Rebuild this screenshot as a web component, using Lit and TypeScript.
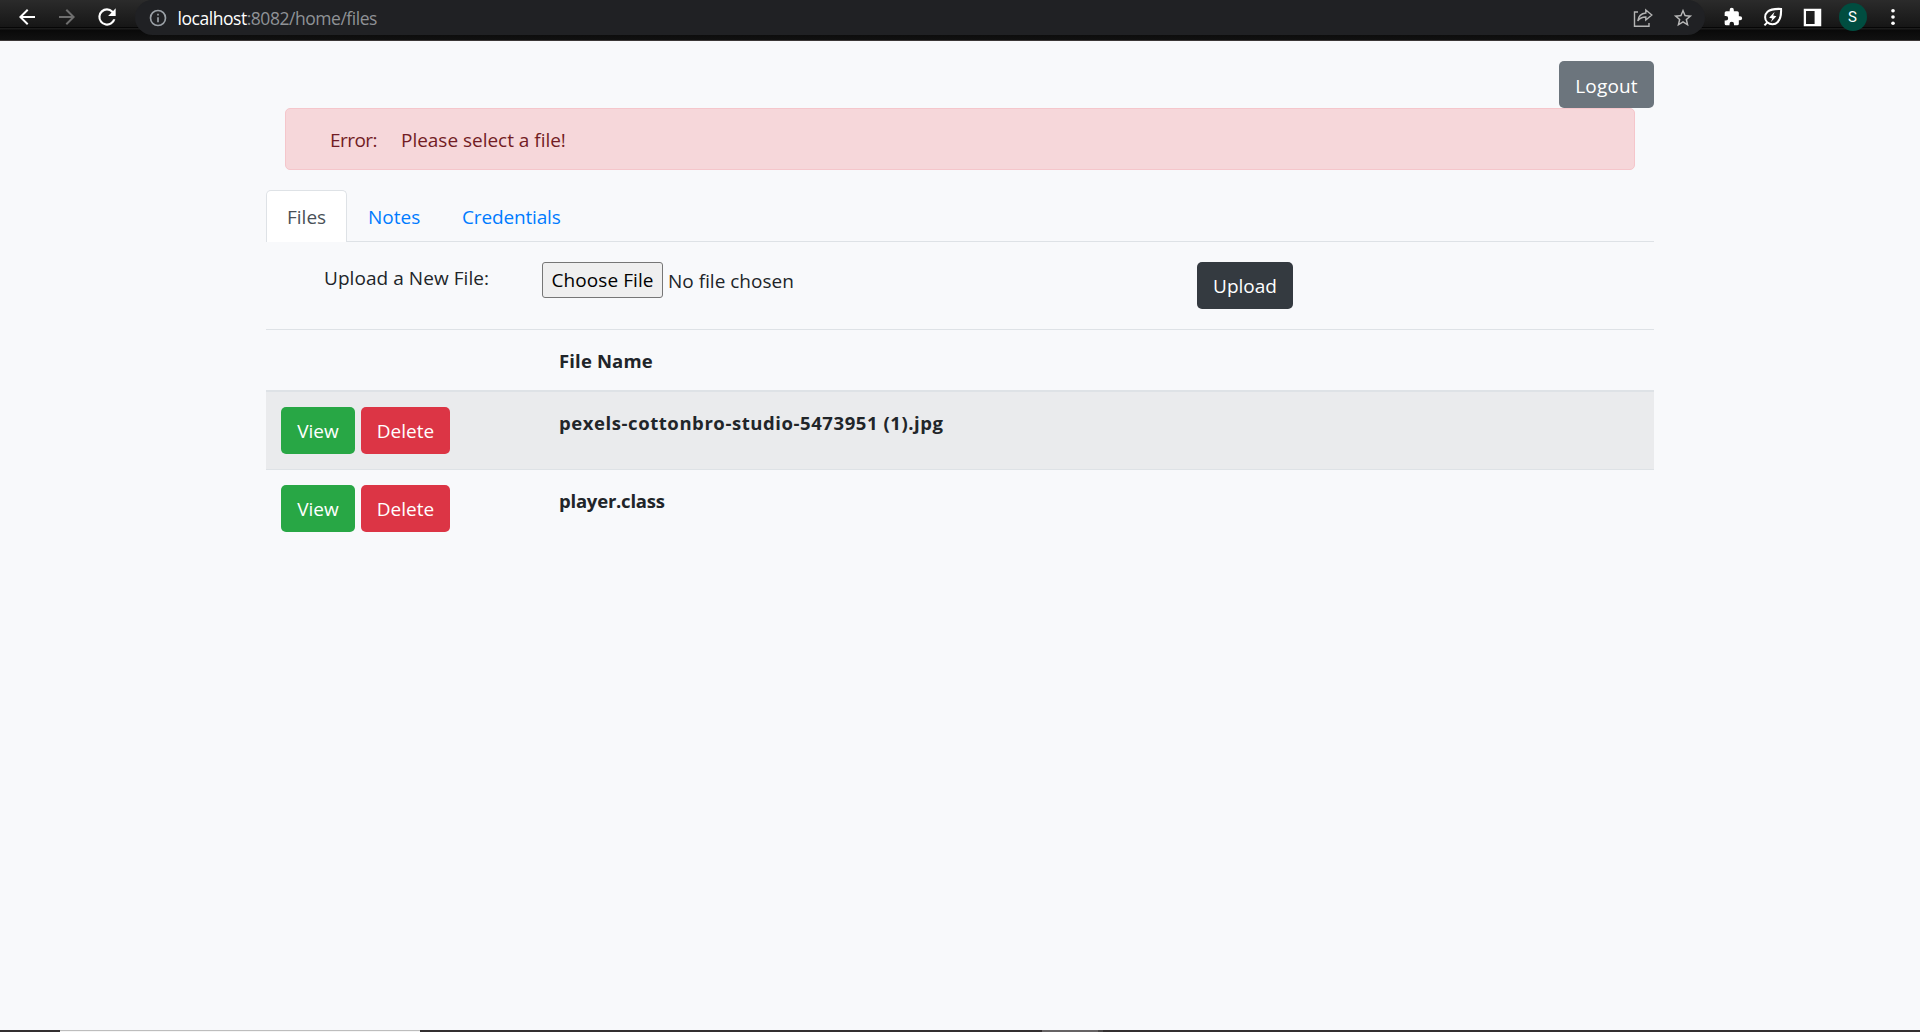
import { LitElement, html, css, svg } from "lit";
import { customElement, property } from "lit/decorators.js";

const icons: Record<string, unknown> = {
  back: svg`<path fill="#fff" d="M20 11H7.83l5.59-5.59L12 4l-8 8 8 8 1.41-1.41L7.83 13H20z"/>`,
  forward: svg`<path fill="#6f6f6f" d="M4 11h12.17l-5.59-5.59L12 4l8 8-8 8-1.41-1.41L16.17 13H4z"/>`,
  reload: svg`<path fill="#fff" d="M17.65 6.35A7.96 7.96 0 0 0 12 4a8 8 0 1 0 7.73 10h-2.08A6 6 0 1 1 12 6c1.66 0 3.14.69 4.22 1.78L13 11h7V4z"/>`,
  info: svg`<path fill="#9aa0a6" d="M11 7h2v2h-2zm0 4h2v6h-2zm1-9a10 10 0 1 0 0 20 10 10 0 0 0 0-20zm0 18a8 8 0 1 1 0-16 8 8 0 0 1 0 16z"/>`,
  share: svg`<g fill="none" stroke="#b4b4b4" stroke-width="1.4"><path d="M7 6H3.500v14.200h14.500V17"/><path d="M14.800 4l6 5-6 5v-3c-4 0-6.300 1.300-8 4 .5-4.500 3-7.500 8-8z"/></g>`,
  star: svg`<path fill="#b9b9b9" d="M22 9.240l-7.190-.62L12 2 9.190 8.630 2 9.240l5.460 4.730L5.820 21 12 17.270 18.180 21l-1.630-7.030zM12 15.400l-3.760 2.270 1-4.280-3.320-2.880 4.380-.38L12 6.100l1.710 4.040 4.380.38-3.320 2.880 1 4.280z"/>`,
  puzzle: svg`<path fill="#fff" d="M20.500 11H19V7a2 2 0 0 0-2-2h-4V3.500a2.500 2.500 0 0 0-5 0V5H4a2 2 0 0 0-2 2v3.800h1.500a2.700 2.700 0 0 1 0 5.400H2V20a2 2 0 0 0 2 2h3.800v-1.500a2.700 2.700 0 0 1 5.400 0V22H17a2 2 0 0 0 2-2v-4h1.500a2.500 2.500 0 0 0 0-5z"/>`,
  leaf: svg`<g fill="none" stroke="#fff" stroke-width="2.200"><path d="M20.800 3.200c-6-.3-11.500.2-14.800 3.100-3.500 3.200-3.300 8.600-.3 11.500 3.300 3 8.500 3 11.500-.3 3-3.200 3.900-8.300 3.600-14.300z"/><path d="M6 17.600l-3.300 3.600"/></g><path fill="#fff" d="M13.800 6.200l-6 6.500 3.500.8-1.800 4.200 6.200-6.500-3.500-.8z"/>`,
  panel: svg`<path fill="#fff" d="M2 2h20v20H2zM4.600 4.600v14.800h9.800V4.600z" fill-rule="evenodd"/>`,
  more: svg`<g fill="#fff"><circle cx="12" cy="4.500" r="2.200"/><circle cx="12" cy="12" r="2.200"/><circle cx="12" cy="19.500" r="2.200"/></g>`,
};

const icon = (name: string, size: number) =>
  html`<svg width=${size} height=${size} viewBox="0 0 24 24">${icons[name]}</svg>`;

@customElement("browser-bar")
export class BrowserBar extends LitElement {
  static styles = css`
    :host { display: block; }
    .bar {
      height: 41px; box-sizing: border-box; display: flex; align-items: flex-start;
      border-bottom: 1px solid #3b3737;
      background: linear-gradient(#2b2b2b 0, #161616 27px, #060606 27px, #060606 28px, #1c1c1c 28px, #1c1c1c 29px, #090909 30px, #111 40px);
    }
    .nav { display: flex; flex: none; padding-left: 7px; width: 135px; box-sizing: border-box; }
    .cell { flex: none; width: 40px; height: 34px; display: flex; align-items: center; justify-content: center; }
    .omni {
      flex: none; width: 1570px; height: 35px; box-sizing: border-box;
      border-radius: 17.5px; background: #202124; display: flex; align-items: center; padding: 0 2px 0 12.5px;
    }
    .url { font: 17.5px/34px "Open Sans", sans-serif; color: #8f9296; margin-left: 10px; flex: 1; letter-spacing: -0.46px; white-space: nowrap; }
    .host { color: #fff; }
    .tools { display: flex; padding-left: 7.500px; }
    .avatar { width: 28px; height: 28px; border-radius: 50%; background: #004d40; color: #fff; font: 15px/28px Roboto, sans-serif; text-align: center; }
    svg { display: block; }
  `;
  render() {
    return html`<div class="bar">
      <div class="nav">
        <div class="cell">${icon("back", 24)}</div>
        <div class="cell">${icon("forward", 24)}</div>
        <div class="cell">${icon("reload", 26)}</div>
      </div>
      <div class="omni">
        ${icon("info", 20)}
        <div class="url"><span class="host">localhost</span>:8082/home/files</div>
        <div class="cell">${icon("share", 24)}</div>
        <div class="cell">${icon("star", 22)}</div>
      </div>
      <div class="tools">
        <div class="cell">${icon("puzzle", 20)}</div>
        <div class="cell">${icon("leaf", 22)}</div>
        <div class="cell">${icon("panel", 21)}</div>
        <div class="cell"><div class="avatar">S</div></div>
        <div class="cell">${icon("more", 20)}</div>
      </div>
    </div>`;
  }
}

@customElement("action-button")
export class ActionButton extends LitElement {
  @property() label = "";
  @property() kind = "secondary";
  static styles = css`
    :host { display: block; }
    .btn {
      width: 100%; height: 47px; border: 0; border-radius: 5px; color: #fff; padding: 1px 0 0;
      font: 19px/44px "Open Sans", sans-serif; text-align: center; display: block;
    }
    .secondary { background: #6c757d; padding-top: 2px; letter-spacing: 0.15px; }
    .dark { background: #343a40; }
    .success { background: #28a745; }
    .danger { background: #dc3545; }
  `;
  render() {
    return html`<button class="btn ${this.kind}">${this.label}</button>`;
  }
}

@customElement("app-root")
export class AppRoot extends LitElement {
  files = [
    { name: "pexels-cottonbro-studio-5473951 (1).jpg", track: "wide" },
    { name: "player.class", track: "tight" },
  ];
  static styles = css`
    :host { display: flex; flex-direction: column; height: 1032px; background: #f8f9fb; color: #212529; font: 19px/30px "Open Sans", sans-serif; white-space: nowrap; }
    .page { flex: 1; width: 1388px; margin-left: 266px; padding-top: 20px; }
    .top { display: flex; justify-content: flex-end; }
    .logout { width: 95px; }
    .alert { margin: 0 19px; height: 62px; box-sizing: border-box; border: 1px solid #f5c6cb; border-radius: 5px; background: #f6d7da; color: #721c24; display: flex; padding: 16px 0 0 44px; }
    .err { width: 71px; letter-spacing: -0.55px; }
    .msg { letter-spacing: -0.02px; }
    .tabs { margin-top: 20px; height: 52px; box-sizing: border-box; border-bottom: 1px solid #dee2e6; display: flex; color: #007bff; }
    .tab { height: 52px; box-sizing: border-box; padding: 12px 0 0 21px; }
    .active { width: 81px; color: #495057; background: #fff; border: 1px solid #dee2e6; border-bottom: 0; border-radius: 5px 5px 0 0; padding: 11px 0 0 20px; }
    .notes { width: 94px; }
    .creds { letter-spacing: -0.15px; }
    .form { height: 87px; display: flex; padding-top: 20px; box-sizing: border-box; align-items: flex-start; }
    .label { width: 218px; padding-left: 58px; line-height: 33px; letter-spacing: 0.06px; }
    .choose { width: 121px; height: 36px; box-sizing: border-box; border: 1px solid #767676; border-radius: 3px; background: #efefef; color: #000; font: 19px/33px "Open Sans", sans-serif; padding: 1px 0 0; text-align: center; letter-spacing: 0.08px; }
    .none { padding: 4px 0 0 5px; width: 529px; box-sizing: content-box; }
    .upload { width: 96px; }
    .head { border-top: 1px solid #dee2e6; border-bottom: 2px solid #dee2e6; height: 63px; box-sizing: border-box; display: flex; align-items: flex-start; }
    .row { height: 78px; box-sizing: border-box; display: flex; padding-top: 15px; }
    .row.odd { background: #eaebed; border-bottom: 1px solid #dee2e6; }
    .ops { display: flex; gap: 6px; width: 293px; padding-left: 15px; box-sizing: border-box; }
    .view { width: 74px; }
    .del { width: 89px; }
    .name { font-weight: 700; padding-top: 1px; font-size: 18.5px; }
    .wide { letter-spacing: 0.57px; }
    .tight { letter-spacing: -0.22px; }
    .head .name { padding-top: 16px; letter-spacing: 0.15px; }
    .strip { height: 2px; display: flex; background: #332f30; }
    .seg1 { margin-left: 60px; width: 360px; background: linear-gradient(#bdbdbd 50%, #f5f5f5 50%); }
    .seg2 { margin-left: 622px; width: 56px; background: #666364; }
    .seg3 { width: 5px; background: #4a4748; }
  `;
  render() {
    return html`
      <browser-bar></browser-bar>
      <div class="page">
        <div class="top"><action-button class="logout" label="Logout"></action-button></div>
        <div class="alert"><span class="err">Error:</span><span class="msg">Please select a file!</span></div>
        <div class="tabs">
          <div class="tab active">Files</div>
          <div class="tab notes">Notes</div>
          <div class="tab creds">Credentials</div>
        </div>
        <div class="form">
          <div class="label">Upload a New File:</div>
          <button class="choose">Choose File</button>
          <div class="none">No file chosen</div>
          <action-button class="upload" kind="dark" label="Upload"></action-button>
        </div>
        <div class="head"><div class="ops"></div><div class="name">File Name</div></div>
        ${this.files.map((f, i) => html`
          <div class="row ${i % 2 ? "" : "odd"}">
            <div class="ops">
              <action-button class="view" kind="success" label="View"></action-button>
              <action-button class="del" kind="danger" label="Delete"></action-button>
            </div>
            <div class="name ${f.track}">${f.name}</div>
          </div>`)}
      </div>
      <div class="strip"><div class="seg1"></div><div class="seg2"></div><div class="seg3"></div></div>
    `;
  }
}
